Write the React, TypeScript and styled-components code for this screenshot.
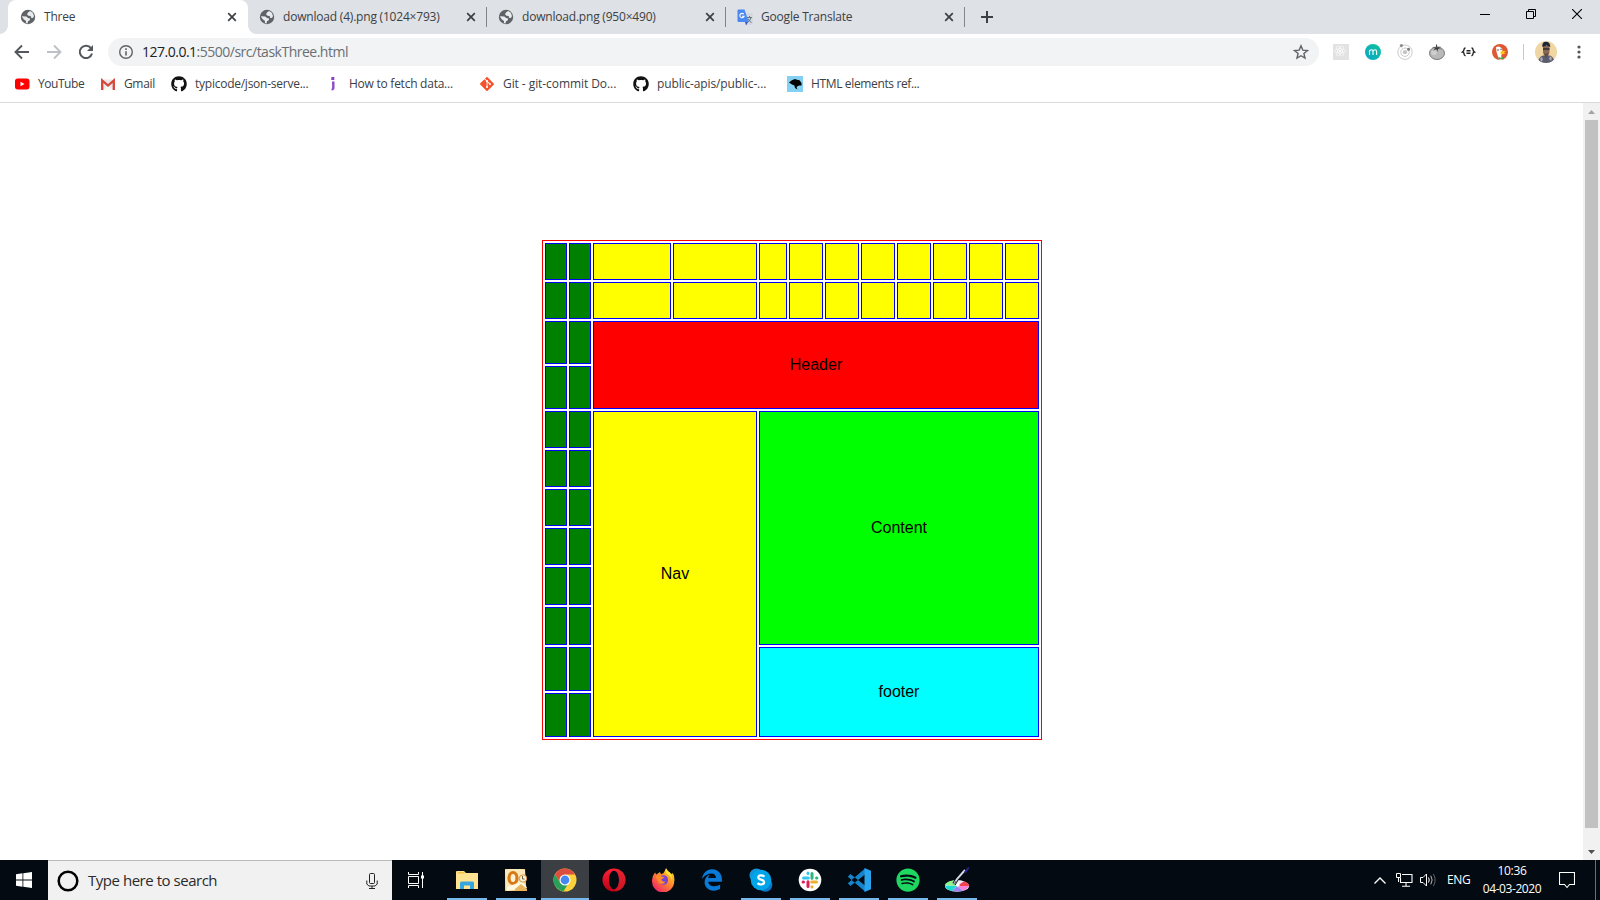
import React from 'react';
import styled, { createGlobalStyle } from 'styled-components';
import { FaGithub, FaGitAlt, FaReact, FaSpotify, FaEdgeLegacy } from 'react-icons/fa';

const GlobalStyle = createGlobalStyle`
  * { box-sizing: border-box; }
  html, body { margin: 0; padding: 0; overflow: hidden; }
  body { background: #fff; font-family: "Open Sans", "Noto Sans", sans-serif; font-size: 12px; color: #3c4043; }
  svg { display: block; flex: none; }
`;

const Window = styled.div`
  display: flex;
  flex-direction: column;
  width: 1600px;
  height: 900px;
  overflow: hidden;
`;

const TabStrip = styled.div`
  display: flex;
  height: 34px;
  padding-left: 8px;
  background: #dee1e6;
`;

const Tab = styled.div<{ $active?: boolean; $line?: boolean }>`
  position: relative;
  display: flex;
  align-items: center;
  width: ${p => (p.$active ? 240 : 239)}px;
  margin-right: ${p => (p.$active ? -1 : 0)}px;
  height: 34px;
  padding: 0 ${p => (p.$active ? 9 : 8)}px 0 12px;
  border-radius: 8px 8px 0 0;
  background: ${p => (p.$active ? '#fff' : 'transparent')};
  ${p => p.$active && `
    &::before, &::after {
      content: '';
      position: absolute;
      bottom: 0;
      width: 8px;
      height: 8px;
    }
    &::before { left: -8px; background: radial-gradient(circle at 0 0, transparent 7.5px, #fff 8px); }
    &::after { right: -8px; background: radial-gradient(circle at 100% 0, transparent 7.5px, #fff 8px); }
  `}
  ${p => p.$line && `
    &::after {
      content: '';
      position: absolute;
      right: -1px;
      top: 7px;
      width: 1px;
      height: 20px;
      background: #80868b;
    }
  `}
`;

const Text = styled.span<{ $spacing?: number }>`
  white-space: nowrap;
  line-height: 16px;
  letter-spacing: ${p => p.$spacing ?? -0.2}px;
`;

const TabTitle = styled(Text)`
  flex: 1;
  margin-left: 8px;
`;

const NewTab = styled.div`
  display: flex;
  align-items: center;
  padding-left: 17px;
`;

const WindowControls = styled.div`
  display: flex;
  height: 28px;
  margin-left: auto;
`;

const WindowButton = styled.div`
  display: flex;
  align-items: center;
  justify-content: center;
  width: 46px;
`;

const Toolbar = styled.div`
  display: flex;
  align-items: center;
  height: 36px;
  padding-left: 14px;
`;

const NavButtons = styled.div`
  display: flex;
  gap: 16px;
  width: 94px;
`;

const Omnibox = styled.div`
  display: flex;
  align-items: center;
  width: 1211px;
  height: 28px;
  padding: 0 10px;
  border-radius: 14px;
  background: #f1f3f4;
`;

const Address = styled(Text)`
  flex: 1;
  margin-left: 8px;
  font-size: 14px;
  line-height: 20px;
  color: #6a6e73;
  b { font-weight: 400; color: #202124; }
`;

const Extensions = styled.div`
  display: flex;
  align-items: center;
  gap: 16px;
  margin-left: 14px;
`;

const Separator = styled.div`
  width: 1px;
  height: 16px;
  margin: 0 11px 0 15px;
  background: #c6c8cb;
`;

const MenuButton = styled.div`
  margin-left: 14px;
`;

const Bookmarks = styled.div`
  display: flex;
  height: 33px;
  padding: 6px 0 0 14px;
  border-bottom: 1px solid #d8dadc;
`;

const Bookmark = styled.div<{ $width: number }>`
  display: flex;
  align-items: center;
  gap: 8px;
  height: 16px;
  width: ${p => p.$width}px;
`;

const Viewport = styled.div`
  display: flex;
  height: 757px;
`;

const Page = styled.div`
  flex: 1;
  padding: 137px 0 0 542px;
`;

const Board = styled.div`
  display: grid;
  grid-template-columns: 22px 22px 78px 84px 28px repeat(7, 34px);
  grid-template-rows: 37px 37px 43px 43px repeat(4, 37px) 38px 38px 44px 44px;
  gap: 2px;
  width: 500px;
  height: 500px;
  padding: 2px;
  border: 1px solid #f00;
  font: 16px/18px "Liberation Sans", Arial, sans-serif;
  color: #000;
`;

const Cell = styled.div<{ $color: string; $area: string }>`
  display: flex;
  align-items: center;
  justify-content: center;
  grid-area: ${p => p.$area};
  border: 1px solid #00f;
  background: ${p => p.$color};
`;

const Scrollbar = styled.div`
  display: flex;
  flex-direction: column;
  justify-content: space-between;
  align-items: center;
  width: 17px;
  background: #f1f1f1;
`;

const ScrollArrow = styled.div`
  display: flex;
  align-items: center;
  justify-content: center;
  height: 17px;
`;

const ScrollThumb = styled.div`
  width: 13px;
  height: 708px;
  margin-bottom: 15px;
  background: #c1c1c1;
`;

const Taskbar = styled.div`
  display: flex;
  height: 40px;
  background: #040a11;
  color: #fff;
`;

const TaskButton = styled.div<{ $state?: 'open' | 'active' }>`
  position: relative;
  display: flex;
  align-items: center;
  justify-content: center;
  width: 48px;
  height: 40px;
  background: ${p => (p.$state === 'active' ? '#3b3e43' : 'transparent')};
  ${p => p.$state && `
    &::after {
      content: '';
      position: absolute;
      bottom: 0;
      left: ${p.$state === 'active' ? 0 : 4}px;
      right: ${p.$state === 'active' ? 0 : 4}px;
      height: 2px;
      background: #76b9ed;
    }
  `}
`;

const SearchBox = styled.div`
  display: flex;
  align-items: center;
  width: 344px;
  padding: 0 14px 0 9px;
  border-top: 1px solid #b9b9b9;
  background: #f1f1f1;
`;

const SearchHint = styled(Text)`
  flex: 1;
  margin: 0 0 2px 9px;
  font-size: 15px;
  line-height: 20px;
  color: #2b2b2b;
`;

const Apps = styled.div`
  display: flex;
  gap: 1px;
  margin-left: 3px;
`;

const Tray = styled.div`
  display: flex;
  align-items: center;
  margin-left: auto;
`;

const Status = styled.div`
  display: flex;
  align-items: center;
  gap: 7px;
  margin: 0 10px;
`;

const Language = styled(Text)`
  width: 30px;
`;

const Clock = styled.div`
  display: flex;
  flex-direction: column;
  align-items: center;
  gap: 2px;
  width: 70px;
  margin-right: 12px;
`;

const DesktopEdge = styled.div`
  width: 5px;
  height: 40px;
  margin-left: 20px;
  border-left: 1px solid #6b6f74;
`;

const Globe = () => (
  <svg width="16" height="16" viewBox="0 0 16 16">
    <circle cx="8" cy="8" r="7.2" fill="#5f6368" />
    <path d="M8.2 3.2l2-1.1 2.6 1.7 1.2 3.2-1 2-2-.3-.3-1.8-2.2-.2-1.5-1.4zM1.7 7.2l4.6.2 1.7 1.5 2.1.6-.3 1.7-1.8 1-.4 2.2-1.7-.4.1-2.1-2.3-1.6z" fill="#e9ebed" />
  </svg>
);
const TabClose = () => (
  <svg width="14" height="14" viewBox="0 0 14 14"><path d="M3.2 3.2l7.6 7.6M10.8 3.2L3.2 10.8" stroke="#3c4043" strokeWidth="1.7" /></svg>
);
const Translate = () => (
  <svg width="16" height="17" viewBox="0 0 16 17">
    <path d="M7 4h8q1 0 1 1v10q0 1-1 1H10z" fill="#d5d8dc" />
    <path d="M10 8.5h5M12.5 7v1.5M14 8.5q-.5 3-3.5 5M11 9.5q1 3 3.5 4" stroke="#607988" fill="none" />
    <path d="M8 13h3l-2 3.5z" fill="#3a55c4" />
    <path d="M1.5.5h6L11.700 13H1.500q-1 0-1-1V1.500q0-1 1-1z" fill="#4a88f4" />
    <path d="M6.8 5.2a2.2 2.2 0 1 0 .4 2H5" stroke="#fff" strokeWidth="1.1" fill="none" />
  </svg>
);
const Back = ({ forward }: { forward?: boolean }) => (
  <svg width="16" height="16" viewBox="0 0 16 16">
    <path d={forward ? 'M1 8h13M8 1.5L14.5 8 8 14.5' : 'M15 8H2M8 1.5L1.5 8 8 14.5'} fill="none" stroke={forward ? '#bdc1c6' : '#54585d'} strokeWidth="1.9" />
  </svg>
);
const Reload = () => (
  <svg width="16" height="16" viewBox="0 0 16 16">
    <path d="M13 4.2A6.2 6.2 0 1 0 14 9.5" fill="none" stroke="#54585d" strokeWidth="2" />
    <path d="M15 1v6H9z" fill="#54585d" />
  </svg>
);
const Info = () => (
  <svg width="16" height="16" viewBox="0 0 16 16">
    <circle cx="8" cy="8" r="6.3" fill="none" stroke="#5f6368" strokeWidth="1.4" />
    <path d="M8 7.2v4.3M8 4.3v1.6" stroke="#5f6368" strokeWidth="1.6" />
  </svg>
);
const Star = () => (
  <svg width="16" height="16" viewBox="0 0 16 16">
    <path d="M8 1.8l1.8 4.3 4.7.4-3.6 3 1.1 4.6L8 11.7l-4 2.4 1.1-4.6-3.6-3 4.7-.4z" fill="none" stroke="#5f6368" strokeWidth="1.4" />
  </svg>
);
const ReactExt = () => (
  <svg width="16" height="16" viewBox="0 0 16 16">
    <rect width="16" height="16" fill="#e2e2e2" />
    <FaReact x="1" y="1" width="14" height="14" color="#fff" />
  </svg>
);
const MomentumExt = () => (
  <svg width="16" height="16" viewBox="0 0 16 16">
    <defs><linearGradient id="teal" x1="0" y1="1" x2="1" y2="0"><stop offset="0" stopColor="#0aa6c9" /><stop offset="1" stopColor="#10c39b" /></linearGradient></defs>
    <circle cx="8" cy="8" r="8" fill="url(#teal)" />
    <path d="M4.500 11V6M4.500 7.500Q5 5.700 6.400 5.700 8 5.700 8 7.500V11M8 7.500Q8.500 5.700 10 5.700q1.600 0 1.600 1.800V11" fill="none" stroke="#fff" strokeWidth="1.1" />
  </svg>
);
const OrbitExt = () => (
  <svg width="16" height="16" viewBox="0 0 16 16">
    <g fill="none" stroke="#c9c9c9"><circle cx="8" cy="8.200" r="7.200" /><circle cx="8" cy="8.200" r="4.200" /></g>
    <circle cx="8" cy="8.200" r="2.100" fill="#c4c4c4" /><circle cx="4.400" cy="1.600" r="1.600" fill="#8c8c8c" /><circle cx="11.500" cy="5.300" r="1.500" fill="#777" />
  </svg>
);
const TomatoExt = () => (
  <svg width="16" height="16" viewBox="0 0 16 16">
    <ellipse cx="8" cy="9.200" rx="7.500" ry="6.300" fill="#b9b9b9" stroke="#6e6e6e" strokeWidth=".9" />
    <ellipse cx="5" cy="8.500" rx="2.800" ry="2.500" fill="#cfcfcf" />
    <path d="M7 .5h1l.2 3L12 2.500 9.500 4.200l3.500 1-4-.1-.5 3-1-2.800L4 6.800l2.200-2.200L3 3.500l4.200.1z" fill="#3c3c3c" />
  </svg>
);
const BracesExt = () => (
  <svg width="15" height="10" viewBox="0 0 14 10">
    <path d="M4 1Q2.500 1 2.500 2.400T1 5q1.500.3 1.500 1.700T4 9M10 1q1.500 0 1.500 1.400T13 5q-1.500.3-1.500 1.700T10 9M5 3.800h4M5 6.300h4" fill="none" stroke="#222" strokeWidth="1.400" />
  </svg>
);
const DuckExt = () => (
  <svg width="16" height="16" viewBox="0 0 16 16">
    <circle cx="8" cy="8" r="8" fill="#de5833" />
    <path d="M4 3.200Q6 1.600 8.500 3.200q2.300 1.300 2 4.800L9.200 12l.8 3.500H7L4.500 8z" fill="#fff" />
    <path d="M8.500 7.700q2.500-1.500 5.700-.7l-2.500 1.300 2 .6-2.200 1.300-3-.5z" fill="#fdc812" />
    <path d="M6.500 12.800l2.300.9 2.700-.9v2.600l-2.700-.6-2.300.6z" fill="#45a848" />
    <circle cx="6" cy="6" r=".8" fill="#356" /><circle cx="9" cy="5.500" r=".7" fill="#356" />
  </svg>
);
const Avatar = () => (
  <svg width="22" height="22" viewBox="0 0 22 22">
    <defs><clipPath id="face"><circle cx="11" cy="11" r="11" /></clipPath></defs>
    <g clipPath="url(#face)">
      <rect width="22" height="22" fill="#f0d6a2" />
      <path d="M3 22q0-6 5-7.500h7q4 1.500 5 7.500z" fill="#5a5d72" />
      <path d="M5 17l2-1 1 3-2 2zM15 15l2 2-1 3-2-2z" fill="#a9a8af" />
      <path d="M8 5h6.500v6q-.5 4-3.200 5Q8.500 15 8 11z" fill="#8a6650" />
      <path d="M7.300 6Q6.800.8 11 .8t4.300 5.200l-3.500-1.500z" fill="#1d2637" />
      <path d="M8 7.300h6.500v1.500H8z" fill="#2b2b33" />
      <path d="M9 12.500h4.500l-2.300 5z" fill="#5e4c4a" />
    </g>
  </svg>
);
const Dots = () => (
  <svg width="16" height="16" viewBox="0 0 16 16" fill="#54585d"><circle cx="8" cy="3" r="1.600" /><circle cx="8" cy="8" r="1.600" /><circle cx="8" cy="13" r="1.600" /></svg>
);
const YouTube = () => (
  <svg width="16" height="16" viewBox="0 0 16 16"><rect x="1" y="2.500" width="14.500" height="11" rx="2.700" fill="#f00" /><path d="M6.500 5.700v4.600L10.500 8z" fill="#fff" /></svg>
);
const Gmail = () => (
  <svg width="16" height="16" viewBox="0 0 16 16">
    <path d="M1 3.500h14V14H1z" fill="#e9e9e9" /><path d="M3 14l5-5 5 5z" fill="#f7f7f7" />
    <path d="M2.200 14V4.500L8 9.500l5.800-5V14" fill="none" stroke="#d8463b" strokeWidth="2.300" />
  </svg>
);
const JIcon = () => (
  <svg width="16" height="16" viewBox="0 0 16 16"><rect x="6.300" y="1" width="3" height="3" fill="#8b3fc7" /><path d="M7 5.500h2.500V12q0 2.300-3 2.600v-1.600L7.200 12z" fill="#8b4ac8" /></svg>
);
const Mdn = () => (
  <svg width="16" height="16" viewBox="0 0 16 16"><rect width="16" height="16" fill="#83d0f2" /><path d="M2 6.500l2.500-2L6 3.700 8 3l2 .8 2.500.5L14.500 7v2.500H12L9.500 11l1 2.500L8 12l-.6-2.500L5 8.500z" fill="#000" /></svg>
);
const Windows = () => (
  <svg width="16" height="16" viewBox="0 0 16 16" fill="#fff"><path d="M0 2.200L6.500 1.300v6.200H0zM7.300 1.200L16 0v7.500H7.300zM0 8.400h6.500v6.300L0 13.800zM7.300 8.400H16V16l-8.700-1.200z" /></svg>
);
const Cortana = () => (
  <svg width="22" height="22" viewBox="0 0 22 22"><circle cx="11" cy="11" r="9.300" fill="none" stroke="#000" strokeWidth="2.500" /></svg>
);
const Mic = () => (
  <svg width="12" height="16" viewBox="0 0 12 16" fill="none" stroke="#222"><rect x="3.500" y=".5" width="5" height="10" rx="1" /><path d="M.8 7.500V11l2 2h6.400l2-2V7.500M6 13v2.500M3 15.500h6" /></svg>
);
const TaskView = () => (
  <svg width="16" height="16" viewBox="0 0 16 16" fill="none" stroke="#fff"><path d="M.5 0v2.500h10V0M.5 16v-2.500h10V16M.5 4.500h10v7H.5zM14.500 0v16" /><path d="M13 3.500h3v3h-3z" fill="#fff" stroke="none" /></svg>
);
const Explorer = () => (
  <svg width="22" height="20" viewBox="0 0 22 20"><path d="M0 2q0-1 1-1h7l2 2h12v16H0z" fill="#ffe391" /><path d="M1.500 2h7v1.500h-7z" fill="#f5c343" /><path d="M4 19v-6q0-1.500 1.500-1.500h11q1.500 0 1.500 1.500v6h-4v-3.500H8V19z" fill="#35a7df" /></svg>
);
const Outlook = () => (
  <svg width="22" height="22" viewBox="0 0 22 22">
    <path d="M0 0h20l1.500 22H0z" fill="#f3cc72" /><path d="M0 1q10-3 20 0v8L11 21H1z" fill="#fbe9bc" />
    <ellipse cx="8" cy="9" rx="4" ry="5.500" fill="#fff3d6" stroke="#d77a16" strokeWidth="3.200" />
    <path d="M2 18l16-6 4 7-20 3z" fill="#fff8e2" /><path d="M10 20l6-5 6 5v2H10z" fill="#e9b45c" />
    <circle cx="18" cy="9.500" r="3.700" fill="#f7f3e5" stroke="#dc9433" /><path d="M17.500 7v3h2" fill="none" stroke="#78613e" />
  </svg>
);
const Chrome = () => (
  <svg width="24" height="24" viewBox="0 0 24 24">
    <circle cx="12" cy="12" r="11.500" fill="#fdd13c" />
    <path d="M2 6.300A11.500 11.500 0 0 1 22 6.500H12L7.200 14.700z" fill="#dd4d40" />
    <path d="M2 6.300L7.300 15l4.700 2 2.500-.3-4.100 6.700A11.500 11.500 0 0 1 2 6.300z" fill="#28a05a" />
    <circle cx="12" cy="12" r="5.500" fill="#fff" /><circle cx="12" cy="12" r="4.400" fill="#4688f1" />
  </svg>
);
const Opera = () => (
  <svg width="24" height="24" viewBox="0 0 24 24">
    <defs><linearGradient id="opera" x2="0" y2="1"><stop stopColor="#ff2035" /><stop offset="1" stopColor="#b90016" /></linearGradient></defs>
    <path fillRule="evenodd" d="M12 .5A11.500 11.500 0 1 1 12 23.500 11.500 11.500 0 0 1 12 .5zM12 2.800c-3 0-5 4.200-5 9.200s2 9.200 5 9.200 5-4.200 5-9.200-2-9.200-5-9.200z" fill="url(#opera)" />
    <path d="M12 2.800Q15 .8 18 2.200A11.500 11.500 0 0 1 18 21.800q-3 1.400-6-.6c3 0 5-4.200 5-9.200s-2-9.200-5-9.200z" fill="#d8242f" opacity=".6" />
  </svg>
);
const Firefox = () => (
  <svg width="24" height="24" viewBox="0 0 24 24">
    <defs><linearGradient id="fox" x1="1" y1="0" x2=".2" y2="1"><stop stopColor="#ffe52d" /><stop offset=".45" stopColor="#ff9227" /><stop offset="1" stopColor="#f01e68" /></linearGradient></defs>
    <path d="M15 .2q1.500 3 4 4.500l2 1.500.8-1.500Q24 9 23.200 13.700A11 11 0 0 1 1 13Q.8 8 4 4.500l1.300 2L9 4l1 2.200q3-.8 3.300-2.500z" fill="url(#fox)" />
    <circle cx="12.300" cy="12" r="4.800" fill="#7742d6" /><path d="M4.500 8.200q4-2 6.500.6l2.500.3q-.2 1.700-3 2 .2 3 4 2.600-2 3.500-6.500 1.500z" fill="#ff8a27" /><path d="M15 .2q1.500 3 4 4.500 3 4 2 8-1-5-4.500-6.500-2.500-1-1.500-6z" fill="#ffe22e" />
  </svg>
);
const Skype = () => (
  <svg width="24" height="24" viewBox="0 0 24 24">
    <circle cx="7.500" cy="7.500" r="7" fill="#1593d8" /><circle cx="16.500" cy="16.800" r="6.900" fill="#0a78c8" /><circle cx="12" cy="12" r="10.300" fill="#00a5e9" />
    <path d="M15.400 8.700Q14 7.300 11.700 7.400 9.300 7.600 9.300 9.500q0 1.500 2.800 2.100 3 .7 3 2.700 0 2.100-3.100 2.200-2 0-3.500-1.300" fill="none" stroke="#fff" strokeWidth="2.200" />
  </svg>
);
const Slack = () => (
  <svg width="24" height="24" viewBox="0 0 24 24">
    <circle cx="12" cy="12" r="11.300" fill="#fff" />
    <g strokeWidth="3" strokeLinecap="round">
      <path d="M5.500 10h4.800M10 5v.4" stroke="#36c5f0" /><path d="M14 5.500v4.800M18.600 10h.3" stroke="#2eb67d" />
      <path d="M18.500 14h-4.800M14 18.700v.3" stroke="#ecb22e" /><path d="M10 18.500v-4.800M5.100 14h.4" stroke="#e01e5a" />
    </g>
  </svg>
);
const Code = () => (
  <svg width="24" height="24" viewBox="0 0 24 24">
    <path d="M.8 8.700L3.500 6 18 17.500v6zM.8 15.300L3.500 18 18 6.500v-6z" fill="#1684cc" />
    <path d="M17.500 0L24 2.800v18.400L17.500 24z" fill="#29a4ed" />
  </svg>
);
const Paint = () => (
  <svg width="26" height="26" viewBox="0 0 26 26">
    <ellipse cx="13" cy="19" rx="12" ry="5.800" fill="#eee" />
    <path d="M13 19L1 18q2-4 8-4.500z" fill="#8ff58b" /><path d="M13 19L9 13.500q6-1 11 .8z" fill="#eef" /><path d="M13 19l7-4.700q5 1.700 5 4.700z" fill="#f34352" /><path d="M13 19h12q-1 3-6 4.800z" fill="#f784d9" /><path d="M13 19l6 4.800q-5 1.500-11 .2z" fill="#9d83f7" /><path d="M13 19l-5 5q-7-1.500-7-5.500z" fill="#1edbd1" />
    <circle cx="14" cy="18" r="1.700" fill="#fff" />
    <path d="M10 17l3-5 8-9" stroke="#040a11" strokeWidth="3.600" fill="none" /><path d="M10 17l3-5 8-9" stroke="#d6d6e4" strokeWidth="1.900" fill="none" /><path d="M20 5l4-5 1.500 1-3.500 5z" fill="#2b268e" /><path d="M9 18l2.500-4 1.500 1z" fill="#66656c" />
  </svg>
);
const Network = () => (
  <svg width="17" height="14" viewBox="0 0 17 14" fill="none" stroke="#fff"><path d="M6 1.500h10v8H4.500V5M10 9.500V13M6 13.300h8" strokeWidth="1.100" /><path d="M.5.500h4v4h-4zM2.500 4.500V9" /></svg>
);
const Volume = () => (
  <svg width="17" height="14" viewBox="0 0 17 14" fill="none" stroke="#fff"><path d="M.5 4.500H3L6.500 1v12L3 9.500H.5zM8.500 4.500q1.500 2.500 0 5" /><path d="M10.800 2.700q2.700 4.300 0 8.600" stroke="#b9bbbd" /><path d="M13.300 1q3.700 6 0 12" stroke="#5e6267" /></svg>
);

const palette = { green: '#008000', yellow: '#ffff00' };
const tracks = Array.from({ length: 12 }, (_, i) => i + 1);

const tabs = [
  { title: 'Three', icon: <Globe />, active: true },
  { title: 'download (4).png (1024×793)', icon: <Globe />, line: true },
  { title: 'download.png (950×490)', icon: <Globe />, line: true },
  { title: 'Google Translate', icon: <Translate />, line: true },
];

const bookmarks = [
  { label: 'YouTube', icon: <YouTube />, width: 86, spacing: -0.45 },
  { label: 'Gmail', icon: <Gmail />, width: 71, spacing: -0.35 },
  { label: 'typicode/json-serve...', icon: <FaGithub size={16} color="#111" />, width: 154, spacing: -0.25 },
  { label: 'How to fetch data...', icon: <JIcon />, width: 154, spacing: -0.25 },
  { label: 'Git - git-commit Do...', icon: <FaGitAlt size={16} color="#f4512c" />, width: 154, spacing: -0.07 },
  { label: 'public-apis/public-...', icon: <FaGithub size={16} color="#111" />, width: 154, spacing: -0.13 },
  { label: 'HTML elements ref...', icon: <Mdn />, width: 154, spacing: -0.36 },
];

const apps: { icon: React.ReactNode; state?: 'open' | 'active' }[] = [
  { icon: <Explorer />, state: 'open' },
  { icon: <Outlook />, state: 'open' },
  { icon: <Chrome />, state: 'active' },
  { icon: <Opera /> },
  { icon: <Firefox /> },
  { icon: <FaEdgeLegacy size={22} color="#0a7ad8" /> },
  { icon: <Skype />, state: 'open' },
  { icon: <Slack />, state: 'open' },
  { icon: <Code />, state: 'open' },
  { icon: <FaSpotify size={24} color="#1ed760" />, state: 'open' },
  { icon: <Paint />, state: 'open' },
];

export default function App() {
  return (
    <Window>
      <GlobalStyle />
      <TabStrip>
        {tabs.map(t => (
          <Tab key={t.title} $active={t.active} $line={t.line}>
            {t.icon}
            <TabTitle>{t.title}</TabTitle>
            <TabClose />
          </Tab>
        ))}
        <NewTab>
          <svg width="12" height="12" viewBox="0 0 12 12"><path d="M6 0v12M0 6h12" stroke="#3c4043" strokeWidth="2" /></svg>
        </NewTab>
        <WindowControls>
          <WindowButton><svg width="10" height="10"><path d="M0 5.500h10" stroke="#000" /></svg></WindowButton>
          <WindowButton><svg width="10" height="10" fill="none" stroke="#000"><path d="M.5 2.500h7v7h-7zM2.500 2.500v-2h7v7h-2" /></svg></WindowButton>
          <WindowButton><svg width="10" height="10"><path d="M0 0l10 10M10 0L0 10" stroke="#000" strokeWidth="1.100" /></svg></WindowButton>
        </WindowControls>
      </TabStrip>
      <Toolbar>
        <NavButtons><Back /><Back forward /><Reload /></NavButtons>
        <Omnibox>
          <Info />
          <Address $spacing={-0.5}><b>127.0.0.1</b>:5500/src/taskThree.html</Address>
          <Star />
        </Omnibox>
        <Extensions>
          <ReactExt /><MomentumExt /><OrbitExt /><TomatoExt /><BracesExt /><DuckExt />
        </Extensions>
        <Separator />
        <Avatar />
        <MenuButton><Dots /></MenuButton>
      </Toolbar>
      <Bookmarks>
        {bookmarks.map(b => (
          <Bookmark key={b.label} $width={b.width}>{b.icon}<Text $spacing={b.spacing}>{b.label}</Text></Bookmark>
        ))}
      </Bookmarks>
      <Viewport>
        <Page>
          <Board>
            {tracks.flatMap(row => [1, 2].map(col => (
              <Cell key={`g${row}-${col}`} $color={palette.green} $area={`${row} / ${col}`} />
            )))}
            {[1, 2].flatMap(row => tracks.slice(2).map(col => (
              <Cell key={`y${row}-${col}`} $color={palette.yellow} $area={`${row} / ${col}`} />
            )))}
            <Cell $color="#ff0000" $area="3 / 3 / 5 / 13">Header</Cell>
            <Cell $color={palette.yellow} $area="5 / 3 / 13 / 5">Nav</Cell>
            <Cell $color="#00ff00" $area="5 / 5 / 11 / 13">Content</Cell>
            <Cell $color="#00ffff" $area="11 / 5 / 13 / 13">footer</Cell>
          </Board>
        </Page>
        <Scrollbar>
          <ScrollArrow><svg width="7" height="4"><path d="M0 4L3.500 0 7 4z" fill="#a3a3a3" /></svg></ScrollArrow>
          <ScrollThumb />
          <ScrollArrow><svg width="7" height="4"><path d="M0 0l3.500 4L7 0z" fill="#505050" /></svg></ScrollArrow>
        </Scrollbar>
      </Viewport>
      <Taskbar>
        <TaskButton><Windows /></TaskButton>
        <SearchBox>
          <Cortana />
          <SearchHint $spacing={-0.47}>Type here to search</SearchHint>
          <Mic />
        </SearchBox>
        <TaskButton><TaskView /></TaskButton>
        <Apps>
          {apps.map((a, i) => <TaskButton key={i} $state={a.state}>{a.icon}</TaskButton>)}
        </Apps>
        <Tray>
          <svg width="12" height="7" viewBox="0 0 12 7"><path d="M.5 6.500L6 1l5.500 5.500" fill="none" stroke="#fff" strokeWidth="1.300" /></svg>
          <Status><Network /><Volume /></Status>
          <Language $spacing={-0.4}>ENG</Language>
          <Clock><Text $spacing={-0.3}>10:36</Text><Text $spacing={-0.42}>04-03-2020</Text></Clock>
          <svg width="16" height="17" viewBox="0 0 16 17"><path d="M.5.500h15v12h-5L8 15.500l-2.500-3h-5z" fill="none" stroke="#fff" strokeWidth="1.100" /></svg>
          <DesktopEdge />
        </Tray>
      </Taskbar>
    </Window>
  );
}
